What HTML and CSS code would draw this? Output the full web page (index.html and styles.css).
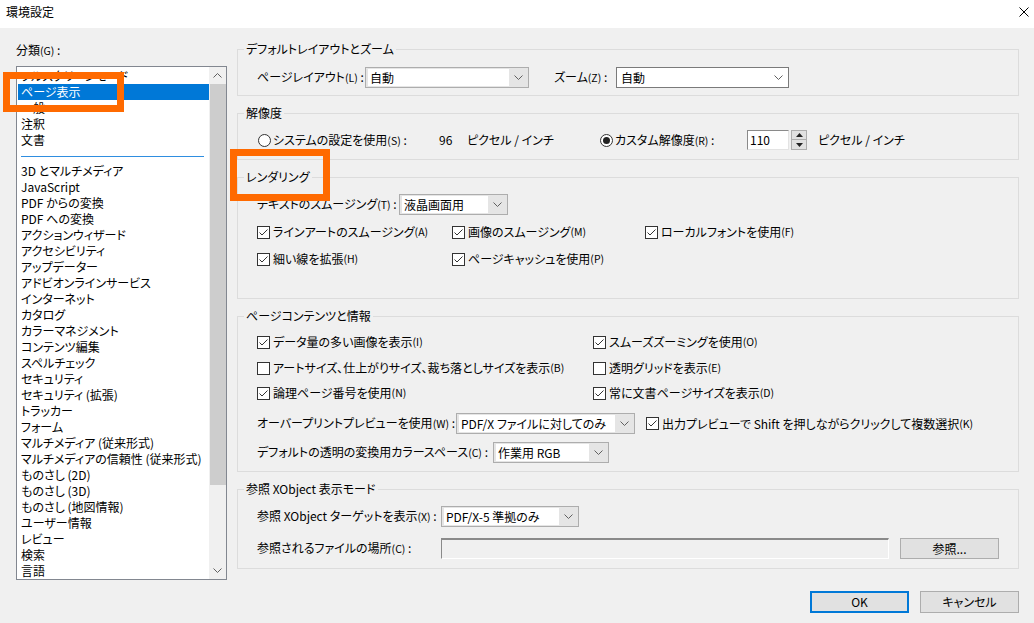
FILE: index.html
```html
<!DOCTYPE html>
<html lang="ja">
<head>
<meta charset="utf-8">
<title>環境設定</title>
<link rel="stylesheet" href="styles.css">
</head>
<body>
<div class="window">
  <header class="titlebar">
    <span class="title">環境設定</span>
    <svg class="close" width="10" height="10" viewBox="0 0 10 10"><path d="M0.5 0.5 L9.5 9.5 M9.5 0.5 L0.5 9.5" stroke="#000" stroke-width="1" fill="none"/></svg>
  </header>

  <div class="content">
    <aside class="sidebar">
      <div class="cat-label">分類<span class="ak">(G)</span> :</div>
      <div class="listbox">
        <ul class="items">
          <li>フルスクリーンモード</li>
          <li class="sel">ページ表示</li>
          <li>一般</li>
          <li>注釈</li>
          <li>文書</li>
          <li class="sep"><div class="sep-line"></div></li>
          <li>3D とマルチメディア</li>
          <li>JavaScript</li>
          <li>PDF からの変換</li>
          <li>PDF への変換</li>
          <li>アクションウィザード</li>
          <li>アクセシビリティ</li>
          <li>アップデーター</li>
          <li>アドビオンラインサービス</li>
          <li>インターネット</li>
          <li>カタログ</li>
          <li>カラーマネジメント</li>
          <li>コンテンツ編集</li>
          <li>スペルチェック</li>
          <li>セキュリティ</li>
          <li>セキュリティ (拡張)</li>
          <li>トラッカー</li>
          <li>フォーム</li>
          <li>マルチメディア (従来形式)</li>
          <li>マルチメディアの信頼性 (従来形式)</li>
          <li>ものさし (2D)</li>
          <li>ものさし (3D)</li>
          <li>ものさし (地図情報)</li>
          <li>ユーザー情報</li>
          <li>レビュー</li>
          <li>検索</li>
          <li>言語</li>
        </ul>
        <div class="scrollbar">
          <div class="sb-btn"><svg width="9" height="5" viewBox="0 0 9 5"><path d="M0.5 4.5 L4.5 0.5 L8.5 4.5" fill="none" stroke="#606060"/></svg></div>
          <div class="sb-thumb"></div>
          <div class="sb-track"></div>
          <div class="sb-btn"><svg width="9" height="5" viewBox="0 0 9 5"><path d="M0.5 0.5 L4.5 4.5 L8.5 0.5" fill="none" stroke="#606060"/></svg></div>
        </div>
      </div>
    </aside>

    <main class="panel">
      <fieldset class="group">
        <legend>デフォルトレイアウトとズーム</legend>
        <div class="gbody g1">
          <div class="row row21">
            <span class="lbl w-layout">ページレイアウト<span class="ak">(L)</span> :</span>
            <div class="combo cb-layout"><span class="combo-field">自動</span><span class="combo-arrow"><svg width="9" height="5" viewBox="0 0 9 5"><path d="M0.5 0.5 L4.5 4.5 L8.5 0.5" fill="none" stroke="#606060"/></svg></span></div>
            <span class="lbl w-zoom">ズーム<span class="ak">(Z)</span> :</span>
            <div class="combo-edit cb-zoom"><span class="combo-text">自動</span><span class="combo-arrow"><svg width="9" height="5" viewBox="0 0 9 5"><path d="M0.5 0.5 L4.5 4.5 L8.5 0.5" fill="none" stroke="#606060"/></svg></span></div>
          </div>
        </div>
      </fieldset>

      <fieldset class="group">
        <legend>解像度</legend>
        <div class="gbody g2">
          <div class="row row20">
            <svg class="radio" width="13" height="13" viewBox="0 0 13 13"><circle cx="6.5" cy="6.5" r="6" fill="#fff" stroke="#333"/></svg>
            <span class="lbl w-sys">システムの設定を使用<span class="ak">(S)</span> :</span>
            <span class="lbl w-num">96</span>
            <span class="lbl w-unit">ピクセル / インチ</span>
            <svg class="radio" width="13" height="13" viewBox="0 0 13 13"><circle cx="6.5" cy="6.5" r="6" fill="#fff" stroke="#333"/><circle cx="6.5" cy="6.5" r="3.5" fill="#222"/></svg>
            <span class="lbl w-custom">カスタム解像度<span class="ak">(R)</span> :</span>
            <span class="spin-input">110</span>
            <span class="spin-btns">
              <span class="spin-btn"><svg width="7" height="4" viewBox="0 0 7 4"><path d="M0 4 L3.5 0 L7 4 Z" fill="#222"/></svg></span>
              <span class="spin-btn"><svg width="7" height="4" viewBox="0 0 7 4"><path d="M0 0 L3.5 4 L7 0 Z" fill="#222"/></svg></span>
            </span>
            <span class="lbl unit2">ピクセル / インチ</span>
          </div>
        </div>
      </fieldset>

      <fieldset class="group">
        <legend>レンダリング</legend>
        <div class="gbody g3">
          <div class="row row21">
            <span class="lbl w-smooth">テキストのスムージング<span class="ak">(T)</span> :</span>
            <div class="combo cb-smooth"><span class="combo-field">液晶画面用</span><span class="combo-arrow"><svg width="9" height="5" viewBox="0 0 9 5"><path d="M0.5 0.5 L4.5 4.5 L8.5 0.5" fill="none" stroke="#606060"/></svg></span></div>
          </div>
          <div class="row row20 mt7">
            <label class="check col-a"><svg class="chk" width="13" height="13" viewBox="0 0 13 13"><rect x="0.5" y="0.5" width="12" height="12" fill="#fff" stroke="#333"/><path d="M2.5 6.5 L5 9 L10.5 3.5" fill="none" stroke="#333"/></svg>ラインアートのスムージング<span class="ak">(A)</span></label>
            <label class="check col-b"><svg class="chk" width="13" height="13" viewBox="0 0 13 13"><rect x="0.5" y="0.5" width="12" height="12" fill="#fff" stroke="#333"/><path d="M2.5 6.5 L5 9 L10.5 3.5" fill="none" stroke="#333"/></svg>画像のスムージング<span class="ak">(M)</span></label>
            <label class="check"><svg class="chk" width="13" height="13" viewBox="0 0 13 13"><rect x="0.5" y="0.5" width="12" height="12" fill="#fff" stroke="#333"/><path d="M2.5 6.5 L5 9 L10.5 3.5" fill="none" stroke="#333"/></svg>ローカルフォントを使用<span class="ak">(F)</span></label>
          </div>
          <div class="row row20 mt7">
            <label class="check col-a"><svg class="chk" width="13" height="13" viewBox="0 0 13 13"><rect x="0.5" y="0.5" width="12" height="12" fill="#fff" stroke="#333"/><path d="M2.5 6.5 L5 9 L10.5 3.5" fill="none" stroke="#333"/></svg>細い線を拡張<span class="ak">(H)</span></label>
            <label class="check col-b"><svg class="chk" width="13" height="13" viewBox="0 0 13 13"><rect x="0.5" y="0.5" width="12" height="12" fill="#fff" stroke="#333"/><path d="M2.5 6.5 L5 9 L10.5 3.5" fill="none" stroke="#333"/></svg>ページキャッシュを使用<span class="ak">(P)</span></label>
          </div>
        </div>
      </fieldset>

      <fieldset class="group">
        <legend>ページコンテンツと情報</legend>
        <div class="gbody g4">
          <div class="row row20">
            <label class="check col-w"><svg class="chk" width="13" height="13" viewBox="0 0 13 13"><rect x="0.5" y="0.5" width="12" height="12" fill="#fff" stroke="#333"/><path d="M2.5 6.5 L5 9 L10.5 3.5" fill="none" stroke="#333"/></svg>データ量の多い画像を表示<span class="ak">(I)</span></label>
            <label class="check"><svg class="chk" width="13" height="13" viewBox="0 0 13 13"><rect x="0.5" y="0.5" width="12" height="12" fill="#fff" stroke="#333"/><path d="M2.5 6.5 L5 9 L10.5 3.5" fill="none" stroke="#333"/></svg>スムーズズーミングを使用<span class="ak">(O)</span></label>
          </div>
          <div class="row row20 mt6">
            <label class="check col-w"><svg class="chk" width="13" height="13" viewBox="0 0 13 13"><rect x="0.5" y="0.5" width="12" height="12" fill="#fff" stroke="#333"/></svg>アートサイズ、仕上がりサイズ、裁ち落としサイズを表示<span class="ak">(B)</span></label>
            <label class="check"><svg class="chk" width="13" height="13" viewBox="0 0 13 13"><rect x="0.5" y="0.5" width="12" height="12" fill="#fff" stroke="#333"/></svg>透明グリッドを表示<span class="ak">(E)</span></label>
          </div>
          <div class="row row20 mt5">
            <label class="check col-w"><svg class="chk" width="13" height="13" viewBox="0 0 13 13"><rect x="0.5" y="0.5" width="12" height="12" fill="#fff" stroke="#333"/><path d="M2.5 6.5 L5 9 L10.5 3.5" fill="none" stroke="#333"/></svg>論理ページ番号を使用<span class="ak">(N)</span></label>
            <label class="check"><svg class="chk" width="13" height="13" viewBox="0 0 13 13"><rect x="0.5" y="0.5" width="12" height="12" fill="#fff" stroke="#333"/><path d="M2.5 6.5 L5 9 L10.5 3.5" fill="none" stroke="#333"/></svg>常に文書ページサイズを表示<span class="ak">(D)</span></label>
          </div>
          <div class="row row21 mt10">
            <span class="lbl w-over">オーバープリントプレビューを使用<span class="ak">(W)</span> :</span>
            <div class="combo cb-over"><span class="combo-field">PDF/X ファイルに対してのみ</span><span class="combo-arrow"><svg width="9" height="5" viewBox="0 0 9 5"><path d="M0.5 0.5 L4.5 4.5 L8.5 0.5" fill="none" stroke="#606060"/></svg></span></div>
            <label class="check ml11"><svg class="chk" width="13" height="13" viewBox="0 0 13 13"><rect x="0.5" y="0.5" width="12" height="12" fill="#fff" stroke="#333"/><path d="M2.5 6.5 L5 9 L10.5 3.5" fill="none" stroke="#333"/></svg>出力プレビューで Shift を押しながらクリックして複数選択<span class="ak">(K)</span></label>
          </div>
          <div class="row row21 mt8">
            <span class="lbl w-cs">デフォルトの透明の変換用カラースペース<span class="ak">(C)</span> :</span>
            <div class="combo cb-cs"><span class="combo-field">作業用 RGB</span><span class="combo-arrow"><svg width="9" height="5" viewBox="0 0 9 5"><path d="M0.5 0.5 L4.5 4.5 L8.5 0.5" fill="none" stroke="#606060"/></svg></span></div>
          </div>
        </div>
      </fieldset>

      <fieldset class="group last">
        <legend>参照 XObject 表示モード</legend>
        <div class="gbody g5">
          <div class="row row21">
            <span class="lbl w-xo">参照 XObject ターゲットを表示<span class="ak">(X)</span> :</span>
            <div class="combo cb-xo"><span class="combo-field">PDF/X-5 準拠のみ</span><span class="combo-arrow"><svg width="9" height="5" viewBox="0 0 9 5"><path d="M0.5 0.5 L4.5 4.5 L8.5 0.5" fill="none" stroke="#606060"/></svg></span></div>
          </div>
          <div class="row row21 mt11">
            <span class="lbl w-xo">参照されるファイルの場所<span class="ak">(C)</span> :</span>
            <span class="field-disabled"></span>
            <button class="btn btn-browse">参照...</button>
          </div>
        </div>
      </fieldset>
    </main>
  </div>

  <footer class="footer">
    <button class="btn btn-ok">OK</button>
    <button class="btn">キャンセル</button>
  </footer>
</div>

<div class="mark mark-list"></div>
<div class="mark mark-render"></div>
</body>
</html>
```

FILE: styles.css
```css
* { box-sizing: border-box; }

html, body {
  margin: 0;
  padding: 0;
}

body {
  width: 1034px;
  height: 623px;
  overflow: hidden;
  position: relative;
  background: #f0f0f0;
  color: #000;
  font-family: "Noto Sans CJK JP", "Noto Sans", sans-serif;
  font-size: 12px;
  line-height: 16px;
  font-feature-settings: "palt";
}

.ak { font-size: 10.5px; }

/* title bar */
.titlebar {
  height: 28px;
  background: #fff;
  display: flex;
  justify-content: space-between;
  align-items: flex-start;
  padding: 0 5px 0 6px;
}
.title {
  font-size: 12px;
  line-height: 16px;
  margin-top: 4px;
}
.close { margin-top: 7px; }

/* layout */
.content {
  display: flex;
  height: 552px;
  padding-left: 16px;
}

.sidebar {
  width: 211px;
  padding-top: 14px;
}
.cat-label { height: 16px; }

.listbox {
  margin-top: 8px;
  height: 514px;
  border: 1px solid #828790;
  background: #fff;
  display: flex;
}
.items {
  list-style: none;
  margin: 0;
  padding: 1px 0 0 1px;
  flex: 1;
  overflow: hidden;
}
.items li {
  height: 16px;
  line-height: 16px;
  padding-left: 3px;
  white-space: nowrap;
}
.items li.sel {
  background: #0078d7;
  color: #fff;
}
.items li.sep {
  height: 15px;
  padding: 8px 5px 0 3px;
}
.sep-line {
  height: 1px;
  background: #2f8ee0;
}

.scrollbar {
  width: 17px;
  background: #f0f0f0;
  display: flex;
  flex-direction: column;
}
.sb-btn {
  height: 17px;
  display: flex;
  align-items: center;
  justify-content: center;
}
.sb-thumb {
  height: 401px;
  margin-left: 1px;
  background: #cdcdcd;
}
.sb-track { flex: 1; }

.panel {
  margin-left: 10px;
  width: 782px;
  padding-top: 13px;
}

/* group boxes */
.group {
  margin: 0 0 9px 0;
  padding: 0;
  border: 1px solid #dcdcdc;
  min-width: 0;
}
.group.last { margin-bottom: 0; }
.group legend {
  margin-left: 6px;
  padding: 0 2px;
  line-height: 16px;
}
.gbody { padding-left: 19px; padding-right: 10px; }
.g1 { padding-top: 10px; padding-bottom: 7px; }
.g2 { padding-top: 9px; padding-bottom: 9px; }
.g3 { padding-top: 9px; padding-bottom: 29px; }
.g4 { padding-top: 8px; padding-bottom: 8px; }
.g5 { padding-top: 9px; padding-bottom: 9px; }

.row {
  display: flex;
  align-items: center;
  white-space: nowrap;
}
.row20 { height: 20px; }
.row21 { height: 21px; }
.mt5 { margin-top: 5px; }
.mt6 { margin-top: 6px; }
.mt7 { margin-top: 7px; }
.mt8 { margin-top: 8px; }
.mt10 { margin-top: 10px; }
.mt11 { margin-top: 11px; }
.ml11 { margin-left: 11px; }

.lbl { flex: none; }
.w-layout { width: 108px; }
.w-zoom { width: 62px; margin-left: 25px; }
.w-sys { width: 166px; }
.w-num { width: 28px; }
.w-unit { width: 132px; }
.w-custom { width: 132px; }
.unit2 { margin-left: 11px; }
.w-smooth { width: 142px; }
.w-over { width: 199px; }
.w-cs { width: 236px; }
.w-xo { width: 184px; }

.radio { flex: none; margin: 0 2px 0 1px; }

/* combo boxes */
.combo {
  flex: none;
  display: flex;
  height: 21px;
  border: 1px solid #adadad;
  background: #e5e5e5;
  padding: 1px 0 1px 2px;
}
.combo-field {
  flex: 1;
  background: #fff;
  line-height: 17px;
  padding-left: 2px;
  overflow: hidden;
}
.combo-arrow {
  width: 19px;
  display: flex;
  align-items: center;
  justify-content: center;
}
.cb-layout { width: 164px; }
.cb-smooth { width: 109px; }
.cb-over { width: 179px; }
.cb-cs { width: 116px; }
.cb-xo { width: 138px; }

.combo-edit {
  flex: none;
  display: flex;
  height: 21px;
  border: 1px solid #7a7a7a;
  background: #fff;
}
.combo-text {
  flex: 1;
  line-height: 19px;
  padding-left: 4px;
}
.cb-zoom { width: 173px; }

/* spin */
.spin-input {
  flex: none;
  width: 42px;
  height: 20px;
  background: #fff;
  border: 1px solid #e3e3e3;
  border-top-color: #8a8a8a;
  border-left-color: #8a8a8a;
  line-height: 18px;
  padding-left: 2px;
}
.spin-btns {
  flex: none;
  width: 16px;
  height: 20px;
  margin-left: 2px;
  display: flex;
  flex-direction: column;
}
.spin-btn {
  height: 10px;
  border: 1px solid #adadad;
  background: #e1e1e1;
  display: flex;
  align-items: center;
  justify-content: center;
}
.spin-btn + .spin-btn { border-top: none; }

/* checkboxes */
.check {
  display: flex;
  align-items: center;
  flex: none;
}
.chk { flex: none; margin-right: 3px; }
.col-a { width: 195px; }
.col-b { width: 193px; }
.col-w { width: 336px; }

/* disabled field + buttons */
.field-disabled {
  flex: none;
  width: 448px;
  height: 21px;
  background: #f0f0f0;
  border: 1px solid #fff;
  border-top: 2px solid #8a8a8a;
  border-left-color: #8a8a8a;
}
.btn {
  flex: none;
  font: inherit;
  font-size: 12px;
  color: #000;
  background: #e1e1e1;
  border: 1px solid #adadad;
  padding: 0;
  margin: 0;
  width: 99px;
  height: 21px;
  line-height: 18px;
}
.btn-browse { margin-left: 11px; }

.footer {
  margin-top: 11px;
  display: flex;
  justify-content: flex-end;
  gap: 11px;
  padding-right: 15px;
}
.footer .btn { height: 22px; }
.btn-ok { border: 2px solid #0078d7; }

/* orange annotation overlays */
.mark {
  position: absolute;
  border: 7px solid #ff6a00;
}
.mark-list { left: 3px; top: 72px; width: 121px; height: 40px; }
.mark-render { left: 230px; top: 149px; width: 100px; height: 52px; }
```
